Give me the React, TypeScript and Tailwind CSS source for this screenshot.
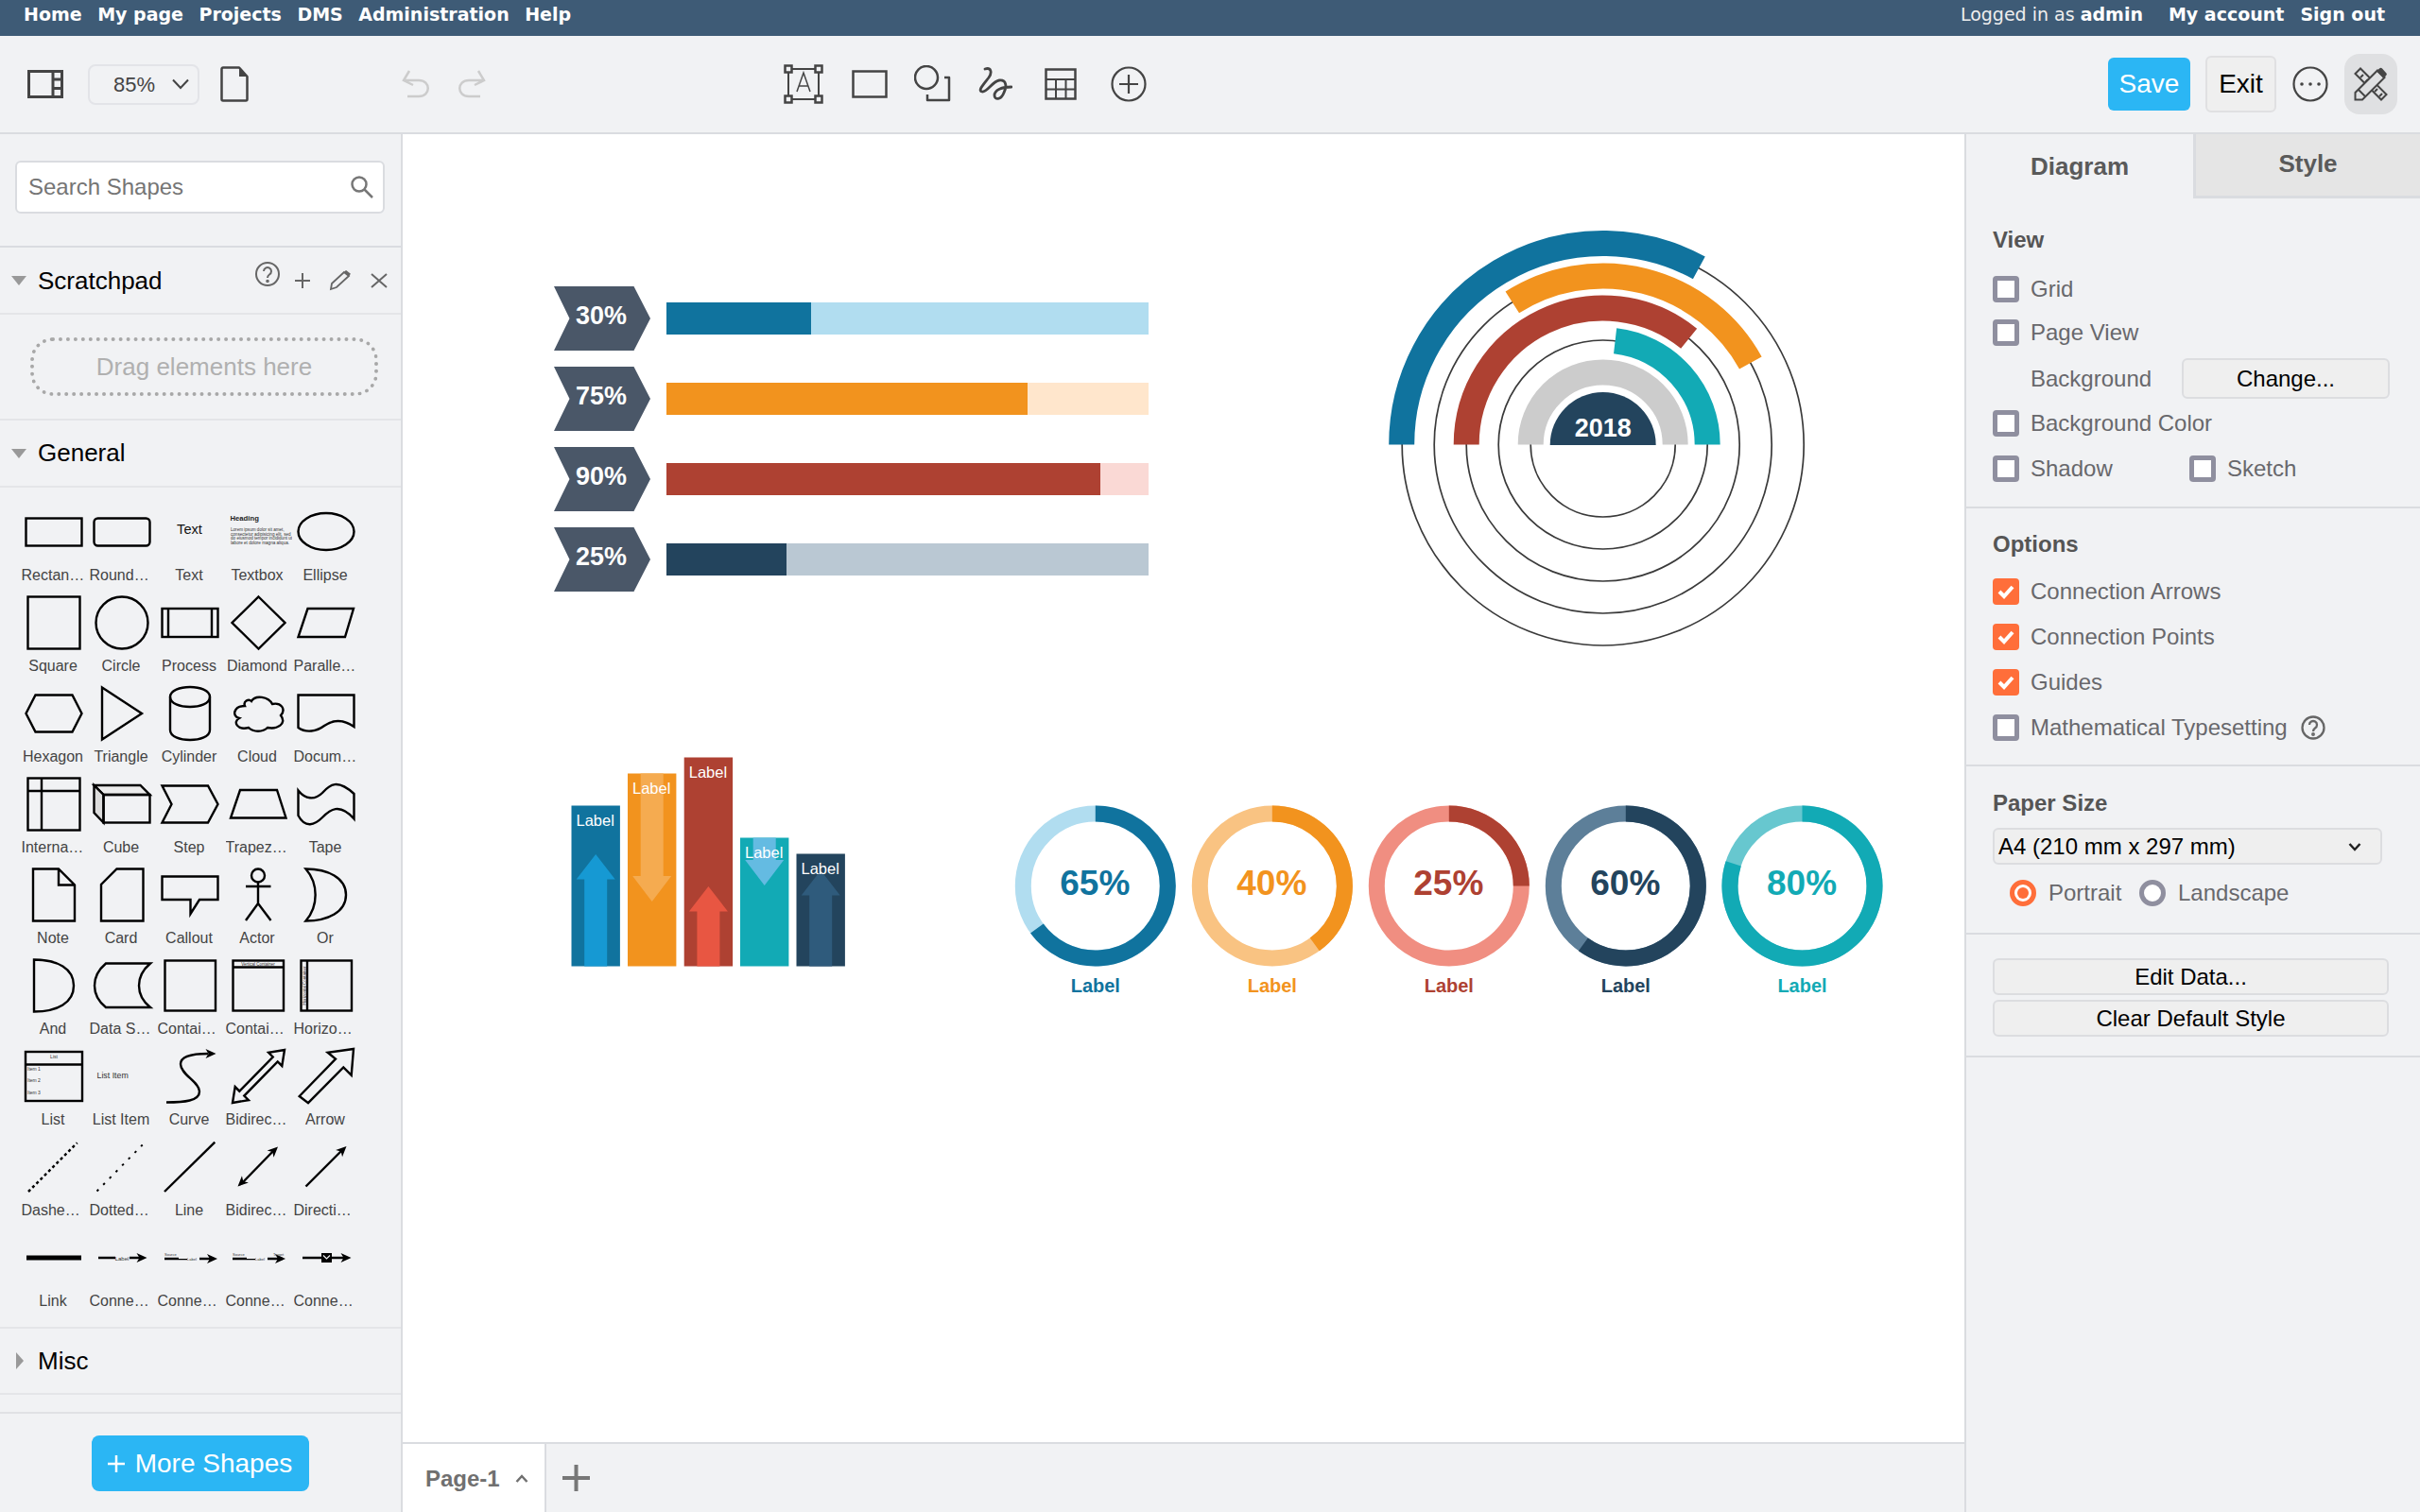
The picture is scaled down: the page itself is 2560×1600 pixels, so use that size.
import type { ReactNode } from 'react';

const INK = '#444';

function arc(cx: number, cy: number, r: number, from: number, to: number) {
  // angles in degrees, 0 is straight up, clockwise
  const pt = (a: number) => {
    const t = ((a - 90) * Math.PI) / 180;
    return `${(cx + r * Math.cos(t)).toFixed(2)} ${(cy + r * Math.sin(t)).toFixed(2)}`;
  };
  const large = to - from > 180 ? 1 : 0;
  return `M${pt(from)} A${r} ${r} 0 ${large} 1 ${pt(to)}`;
}

function Checkbox({ checked }: { checked?: boolean }) {
  if (checked) {
    return (
      <span className="flex h-[28px] w-[28px] shrink-0 items-center justify-center rounded-[4px] bg-[#ff6e3a]">
        <svg width="20" height="18" viewBox="0 0 20 18" fill="none" stroke="#fff" strokeWidth="4">
          <path d="M3 9l5 5 9-10" />
        </svg>
      </span>
    );
  }
  return <span className="block h-[28px] w-[28px] shrink-0 rounded-[4px] border-[5px] border-[#8f8f9f] bg-white" />;
}

function Row({ label, checked, top }: { label: string; checked?: boolean; top: string }) {
  return (
    <div className={`flex items-center gap-[12px] text-[24px] leading-[28px] text-[#68686c] ${top}`}>
      <Checkbox checked={checked} />
      <span>{label}</span>
    </div>
  );
}

function PanelButton({ label, className }: { label: string; className: string }) {
  return (
    <div className={`flex h-[39px] items-center justify-center rounded-[6px] border-2 border-[#dcdde0] bg-[#efefef] text-[24px] text-black ${className}`}>
      {label}
    </div>
  );
}

function Caret({ open }: { open?: boolean }) {
  return (
    <svg width="16" height="18" viewBox="0 0 16 18" className="shrink-0">
      {open ? <path d="M0 4h16l-8 10z" fill="#999" /> : <path d="M3 0l8 9-8 9z" fill="#999" />}
    </svg>
  );
}

function TopBar() {
  return (
    <div className="flex h-[38px] items-start justify-between bg-[#3e5b76] pl-[25px] pr-[37px] pt-[4px] font-['DejaVu_Sans',sans-serif] text-[19px] font-bold leading-[22px] text-white">
      <div className="flex gap-[16.5px]">
        <span>Home</span>
        <span>My page</span>
        <span>Projects</span>
        <span>DMS</span>
        <span>Administration</span>
        <span>Help</span>
      </div>
      <div className="flex">
        <span className="font-normal text-[#eeeeee]">
          Logged in as <span className="font-bold text-white">admin</span>
        </span>
        <span className="ml-[27px]">My account</span>
        <span className="ml-[17px]">Sign out</span>
      </div>
    </div>
  );
}

function Toolbar() {
  return (
    <div className="flex h-[104px] items-center border-b-2 border-[#dadce0] bg-[#f1f2f4] pl-[29px] pr-[24px]">
      <svg width="38" height="30" viewBox="0 0 38 30" fill="none" stroke={INK} strokeWidth="3">
        <rect x="1.5" y="1.5" width="35" height="27" />
        <path d="M27 1.5v27M27 10h10M27 19.5h10" />
      </svg>
      <div className="ml-[26px] flex h-[43px] w-[118px] items-center rounded-[8px] border-2 border-[#e3e4e8] pl-[25px] text-[22px] text-[#444]">
        <span>85%</span>
        <svg width="18" height="12" viewBox="0 0 18 12" fill="none" stroke={INK} strokeWidth="2" className="ml-[18px]">
          <path d="M1 1.5l8 8.5 8-8.5" />
        </svg>
      </div>
      <svg width="30" height="38" viewBox="0 0 30 38" fill="none" stroke={INK} strokeWidth="2.5" className="ml-[22px]">
        <path d="M3 1.5H20L28.5 11V35a1.5 1.5 0 0 1-1.5 1.5H3A1.5 1.5 0 0 1 1.5 35V3A1.5 1.5 0 0 1 3 1.5Z" strokeLinejoin="round" />
        <path d="M20 1.5L28.5 11H20Z" fill={INK} stroke="none" />
      </svg>
      <svg width="30" height="30" viewBox="0 0 30 30" fill="none" stroke="#cccccc" strokeWidth="2.5" className="ml-[162px]">
        <path d="M8 1L2 11l10 5M3 11H18C31 11 31 28 18 28H6" />
      </svg>
      <svg width="32" height="30" viewBox="0 0 32 30" fill="none" stroke="#cccccc" strokeWidth="2.5" className="ml-[27px]">
        <path d="M24 1l6 10-10 5M29 11H14C1 11 1 28 14 28H26" />
      </svg>
      <svg width="42" height="42" viewBox="0 0 42 42" fill="none" stroke={INK} strokeWidth="2" className="ml-[315px]">
        <rect x="5" y="5" width="32" height="32" />
        <g fill="#f1f2f4" strokeWidth="2.5">
          <rect x="1.5" y="1.5" width="7" height="7" />
          <rect x="33.5" y="1.5" width="7" height="7" />
          <rect x="1.5" y="33.5" width="7" height="7" />
          <rect x="33.5" y="33.5" width="7" height="7" />
        </g>
        <path d="M14 29l7-20 7 20M16.5 23h9" strokeWidth="1.5" />
      </svg>
      <svg width="38" height="30" viewBox="0 0 38 30" fill="none" stroke={INK} strokeWidth="2.5" className="ml-[30px]">
        <rect x="1.5" y="1.5" width="35" height="27" />
      </svg>
      <svg width="40" height="40" viewBox="0 0 40 40" fill="none" stroke={INK} strokeWidth="2.5" className="ml-[28px]">
        <circle cx="13" cy="13" r="12" />
        <path d="M32 13h5v24H14v-6" strokeLinejoin="round" />
      </svg>
      <svg width="40" height="38" viewBox="253 70 40 38" fill="none" stroke={INK} strokeWidth="2.8" className="ml-[24px]" strokeLinecap="round">
        <path d="M264 73C270 71 272 76 268 82C262 90 256 96 261 97C266 98 272 86 279 85C287 84 287 92 284 98C281 106 274 106 274 101C274 95 282 92 292 92" />
      </svg>
      <svg width="34" height="34" viewBox="0 0 34 34" fill="none" stroke={INK} strokeWidth="2.5" className="ml-[34px]">
        <rect x="1.5" y="1.5" width="31" height="31" />
        <path d="M1.5 12h31M1.5 22.5h31M12 12v20.500M22.500 12v20.500" strokeWidth="2" />
      </svg>
      <svg width="38" height="38" viewBox="0 0 38 38" fill="none" stroke={INK} strokeWidth="2.2" className="ml-[36px]">
        <circle cx="19" cy="19" r="17.500" />
        <path d="M19 9v20M9 19h20" />
      </svg>
      <div className="ml-auto flex h-[56px] w-[87px] items-center justify-center rounded-[6px] bg-[#2bb6f4] text-[28px] text-white">Save</div>
      <div className="ml-[16px] flex h-[60px] w-[75px] items-center justify-center rounded-[6px] border-2 border-[#e0e0e2] bg-[#efefef] text-[28px] text-black">Exit</div>
      <svg width="38" height="38" viewBox="0 0 38 38" fill="none" stroke={INK} strokeWidth="2.2" className="ml-[17px]">
        <circle cx="19" cy="19" r="17.500" />
        <g fill={INK} stroke="none">
          <circle cx="10" cy="19" r="1.800" />
          <circle cx="19" cy="19" r="1.800" />
          <circle cx="28" cy="19" r="1.800" />
        </g>
      </svg>
      <div className="ml-[17px] flex h-[64px] w-[56px] items-center justify-center rounded-[16px] bg-[#dfe0e2]">
        <svg width="36" height="36" viewBox="0 0 36 36" fill="none" stroke={INK} strokeWidth="2">
          <path d="M1.500 7L7 1.500 34.500 29 29 34.500Z" />
          <path d="M7 11l3-3M12 16l3-3M22 26l3-3M27 31l3-3" />
          <path d="M1.500 34.500V27L25 3.500 32.500 11 9 34.500Z" fill="#dfe0e2" />
          <path d="M27 1.500a2 2 0 0 1 3 0L34 6a2 2 0 0 1 0 3l-2.500 3L24 4.500Z" fill={INK} stroke="none" />
          <path d="M5 24l7 7" />
        </svg>
      </div>
    </div>
  );
}

const ink = { fill: 'none', stroke: '#000', strokeWidth: 2.4 };

function TinyText({ x, y, size, children, anchor }: { x: number; y: number; size: number; children: ReactNode; anchor?: 'middle' }) {
  return (
    <text x={x} y={y} fontSize={size} fill="#333" stroke="none" textAnchor={anchor} fontFamily="'Liberation Sans', sans-serif">
      {children}
    </text>
  );
}

function Head({ x, y, angle }: { x: number; y: number; angle: number }) {
  return <path d="M0 0L-11 -5L-8 0L-11 5Z" fill="#000" stroke="none" transform={`translate(${x} ${y}) rotate(${angle})`} />;
}

const shapes: { label: string; draw: ReactNode }[] = [
  { label: 'Rectangle', draw: <rect x="6.500" y="17.500" width="59" height="29" /> },
  { label: 'Rounded Rectangle', draw: <rect x="6.500" y="17.500" width="59" height="29" rx="4" /> },
  {
    label: 'Text',
    draw: (
      <text x="35.500" y="34" fontSize="14.600" fill="#111" stroke="none" textAnchor="middle" fontFamily="'Liberation Sans', sans-serif">
        Text
      </text>
    ),
  },
  {
    label: 'Textbox',
    draw: (
      <g>
        <text x="6.500" y="20" fontSize="7.700" fontWeight="700" fill="#222" stroke="none" fontFamily="'Liberation Sans', sans-serif">
          Heading
        </text>
        <TinyText x={7} y={31} size={4.600}>Lorem ipsum dolor sit amet,</TinyText>
        <TinyText x={7} y={35.500} size={4.600}>consectetur adipisicing elit, sed</TinyText>
        <TinyText x={7} y={40} size={4.600}>do eiusmod tempor incididunt ut</TinyText>
        <TinyText x={7} y={45} size={4.600}>labore et dolore magna aliqua.</TinyText>
      </g>
    ),
  },
  { label: 'Ellipse', draw: <ellipse cx="36" cy="31.500" rx="29.500" ry="19.500" /> },
  { label: 'Square', draw: <rect x="8.500" y="4.500" width="55" height="55" /> },
  { label: 'Circle', draw: <circle cx="36" cy="32" r="27.500" /> },
  {
    label: 'Process',
    draw: (
      <g>
        <rect x="6.500" y="17" width="59" height="30" />
        <path d="M13 17v30M59 17v30" />
      </g>
    ),
  },
  { label: 'Diamond', draw: <path d="M36.500 4.500L64.500 32L36.500 59.500L8.500 32Z" /> },
  { label: 'Parallelogram', draw: <path d="M16.500 17H65L56 47H6.500Z" /> },
  { label: 'Hexagon', draw: <path d="M16.500 12.500H55.500L65.500 32L55.500 51.500H16.500L6.500 32Z" /> },
  { label: 'Triangle', draw: <path d="M15 4.500L57 32L15 59.500Z" /> },
  {
    label: 'Cylinder',
    draw: (
      <g>
        <path d="M15 14.500C15 0.500 57 0.500 57 14.500V49.500C57 63.500 15 63.500 15 49.500Z" />
        <path d="M15 14.500C15 28.500 57 28.500 57 14.500" />
      </g>
    ),
  },
  {
    label: 'Cloud',
    draw: <path d="M22 24C10 24 8 35 16 37C9 41 14 50 26 47C31 52 41 52 46 47C56 49 67 43 60 34C66 27 60 20 51 22C47 14 33 12 29 19C26 16 20 19 22 24Z" />,
  },
  { label: 'Document', draw: <path d="M6.500 12.500H65.500V46C54 38 44 38 34 45C26 51 15 53 6.500 47Z" /> },
  {
    label: 'Internal Storage',
    draw: (
      <g>
        <rect x="8.500" y="4.500" width="55" height="55" />
        <path d="M23 4.500v55M8.500 18h55" />
      </g>
    ),
  },
  {
    label: 'Cube',
    draw: (
      <g>
        <path d="M6.500 12H55.500L65.500 22H16.500Z" fill="#ececec" />
        <path d="M6.500 12L16.500 22V51.500L6.500 41Z" fill="#dcdcdc" />
        <rect x="16.500" y="22" width="49" height="29.500" />
      </g>
    ),
  },
  { label: 'Step', draw: <path d="M6.500 12.500H55L65.500 32L55 51.500H6.500L16.500 32Z" /> },
  { label: 'Trapezoid', draw: <path d="M17 17H56L65.500 46.500H7Z" /> },
  {
    label: 'Tape',
    draw: <path d="M6.500 17.500C14 27 24 28 32 20C40 11 48 5 65.500 21V47.500C50 30 40 38 32 46C24 54 14 58 6.500 44Z" />,
  },
  { label: 'Note', draw: <path d="M14 4.500H41L58 21.500V59.500H14ZM41 4.500V21.500H58" /> },
  { label: 'Card', draw: <path d="M30.500 4.500H58.500V59.500H14V21Z" /> },
  { label: 'Callout', draw: <path d="M6.500 12.500H65.500V37H46L36.500 52V37H6.500Z" /> },
  {
    label: 'Actor',
    draw: (
      <g>
        <circle cx="36" cy="11.500" r="7" />
        <path d="M36 18.500V41M23 23H49.500M23 59L36 41L49.500 59" />
      </g>
    ),
  },
  { label: 'Or', draw: <path d="M14.500 4.500C38 4.500 57 14 57 32C57 50 38 59.500 14.500 59.500C28 44 28 20 14.500 4.500Z" /> },
  { label: 'And', draw: <path d="M15 4.500C40 4.500 57 14 57 32C57 50 40 59.500 15 59.500Z" /> },
  { label: 'Data Storage', draw: <path d="M19 8.500H66C50 22 50 42 66 55H19C3 42 3 22 19 8.500Z" /> },
  { label: 'Container', draw: <rect x="9.500" y="5.500" width="53.500" height="53" /> },
  {
    label: 'Container',
    draw: (
      <g>
        <rect x="9.500" y="5.500" width="53.500" height="53" />
        <path d="M9.500 12.500H63" />
        <TinyText x={36} y={10.500} size={4.500} anchor="middle">Vertical Container</TinyText>
      </g>
    ),
  },
  {
    label: 'Horizontal Container',
    draw: (
      <g>
        <rect x="9.500" y="5.500" width="53.500" height="53" />
        <path d="M16 5.500V58.500" />
        <g transform="translate(14.500 32) rotate(-90)">
          <TinyText x={0} y={0} size={4.500} anchor="middle">Horizontal Container</TinyText>
        </g>
      </g>
    ),
  },
  {
    label: 'List',
    draw: (
      <g>
        <rect x="6" y="6" width="60" height="52" />
        <path d="M6 19.500H66" />
        <TinyText x={36} y={13} size={5} anchor="middle">List</TinyText>
        <TinyText x={8} y={26} size={5}>Item 1</TinyText>
        <TinyText x={8} y={38} size={5}>Item 2</TinyText>
        <TinyText x={8} y={51} size={5}>Item 3</TinyText>
      </g>
    ),
  },
  {
    label: 'List Item',
    draw: <TinyText x={9.500} y={33.500} size={8.800}>List Item</TinyText>,
  },
  {
    label: 'Curve',
    draw: (
      <g>
        <path d="M11 59.500C30 59.500 46 58 46 48C46 38 26 30 26 19C26 10 40 8 55 8" />
        <Head x={63.500} y={8} angle={0} />
      </g>
    ),
  },
  {
    label: 'Bidirectional Arrow',
    draw: <path d="M64 4L61.300 20.900L56.700 16.400L21.300 52.600L25.900 57.100L9 60L11.700 43.100L16.300 47.700L51.700 11.500L47.100 6.900Z" />,
  },
  { label: 'Arrow', draw: <path d="M65 3L62.700 30.800L54.300 22.400L17 60.200L7.700 53L46 13.500L37.700 6.700Z" /> },
  { label: 'Dashed Line', draw: <path d="M9 58L60.700 6.300" strokeDasharray="3 3" strokeWidth="2.500" /> },
  { label: 'Dotted Line', draw: <path d="M9.500 57.500L57.700 8.500" strokeDasharray="2.500 7" strokeWidth="2" /> },
  { label: 'Line', draw: <path d="M9 58L62.300 5.600" /> },
  {
    label: 'Bidirectional Connector',
    draw: (
      <g>
        <path d="M18 50L54 13" />
        <Head x={57} y={10.500} angle={-44} />
        <Head x={14.500} y={52.500} angle={136} />
      </g>
    ),
  },
  {
    label: 'Directional Connector',
    draw: (
      <g>
        <path d="M14.500 52.500L54 13" />
        <Head x={57.500} y={10} angle={-44} />
      </g>
    ),
  },
  { label: 'Link', draw: <path d="M7 32H65" strokeWidth="5" /> },
  {
    label: 'Connector with Label',
    draw: (
      <g>
        <path d="M11 32H55" />
        <Head x={62.500} y={32} angle={0} />
        <rect x="29" y="27" width="15" height="10" fill="#f1f2f4" stroke="none" />
        <TinyText x={36} y={34.500} size={6} anchor="middle">Label</TinyText>
      </g>
    ),
  },
  {
    label: 'Connector with 2 Labels',
    draw: (
      <g>
        <path d="M9 33H58" />
        <Head x={65} y={33} angle={0} />
        <rect x="24" y="28" width="10" height="5" fill="#f1f2f4" stroke="none" />
        <rect x="33" y="29" width="13" height="8" fill="#f1f2f4" stroke="none" />
        <TinyText x={9} y={30} size={4}>Source</TinyText>
        <TinyText x={33} y={35} size={4}>Label</TinyText>
      </g>
    ),
  },
  {
    label: 'Connector with 3 Labels',
    draw: (
      <g>
        <path d="M9 33H62" />
        <Head x={65} y={33} angle={0} />
        <rect x="24" y="28" width="10" height="5" fill="#f1f2f4" stroke="none" />
        <rect x="33" y="29" width="13" height="8" fill="#f1f2f4" stroke="none" />
        <TinyText x={9} y={30} size={4}>Source</TinyText>
        <TinyText x={33} y={35} size={4}>Label</TinyText>
        <TinyText x={52} y={30} size={4}>Target</TinyText>
      </g>
    ),
  },
  {
    label: 'Connector with Symbol',
    draw: (
      <g>
        <path d="M11 32H55" />
        <Head x={62.500} y={32} angle={0} />
        <rect x="31" y="27" width="11" height="10" fill="#000" stroke="none" />
        <path d="M33 29.500L36.500 33L40 29.500" stroke="#f1f2f4" strokeWidth="1.200" />
      </g>
    ),
  },
];

function Sidebar() {
  return (
    <aside className="flex w-[426px] shrink-0 flex-col border-r-2 border-[#dadce0] bg-[#f1f2f4]">
      <div className="h-[120px] border-b-2 border-[#dadce0] pl-[16px] pt-[28px]">
        <div className="flex h-[56px] w-[391px] items-center justify-between rounded-[6px] border-2 border-[#dadce0] bg-white pl-[12px] pr-[10px] text-[24px] text-[#757575]">
          <span>Search Shapes</span>
          <svg width="24" height="24" viewBox="0 0 24 24" fill="none" stroke="#777" strokeWidth="2.500">
            <circle cx="9" cy="9" r="7.500" />
            <path d="M14.500 14.500L23 23" />
          </svg>
        </div>
      </div>

      <div className="flex h-[71px] items-center border-b-2 border-[#e4e5e8] pl-[12px] text-[26px] text-black">
        <Caret open />
        <span className="ml-[12px] pt-[2px]">Scratchpad</span>
        <svg width="26" height="28" viewBox="0 0 26 28" fill="none" stroke="#666" strokeWidth="2" className="relative top-[-7px] ml-[98px]">
          <circle cx="13" cy="14" r="12" />
          <path d="M9 11a4 4 0 1 1 6 3.500c-1.500 1-2 1.500-2 3.500" />
          <circle cx="13" cy="21.500" r="0.800" />
        </svg>
        <svg width="18" height="18" viewBox="0 0 18 18" fill="none" stroke="#666" strokeWidth="2" className="ml-[15px]">
          <path d="M9 1v16M1 9h16" />
        </svg>
        <svg width="24" height="22" viewBox="0 0 24 22" fill="none" stroke="#666" strokeWidth="1.800" className="ml-[19px]">
          <path d="M2 20l1-6L16 2l5 4L8 18Z" />
          <path d="M17 1l5 4" strokeWidth="3" />
        </svg>
        <svg width="18" height="16" viewBox="0 0 18 16" fill="none" stroke="#666" strokeWidth="2" className="ml-[20px]">
          <path d="M1 1l16 14M17 1L1 15" />
        </svg>
      </div>

      <div className="h-[112px] border-b-2 border-[#e4e5e8] pl-[32px] pt-[24px]">
        <div className="flex h-[62px] w-[368px] items-center justify-center rounded-[24px] border-[4px] border-dotted border-[#a8a8a8] text-[26px] text-[#b0b0b0]">
          Drag elements here
        </div>
      </div>

      <div className="flex h-[71px] items-center border-b-2 border-[#e4e5e8] pl-[12px] text-[26px] text-black">
        <Caret open />
        <span className="ml-[12px]">General</span>
      </div>

      <div className="grid grid-cols-[repeat(5,72px)] auto-rows-[96px] border-b-2 border-[#e4e5e8] pb-[9px] pl-[21px] pt-[15px]">
        {shapes.map((s, i) => (
          <div key={i} className="flex flex-col items-center">
            <svg width="72" height="64" viewBox="0 0 72 64" {...ink}>
              {s.draw}
            </svg>
            <div className="-ml-[2px] mt-[2px] w-[67px] truncate text-center text-[16px] leading-[24px] text-[#444]">{s.label}</div>
          </div>
        ))}
      </div>

      <div className="flex h-[70px] items-center border-b-2 border-[#e4e5e8] pl-[14px] text-[26px] text-black">
        <Caret />
        <span className="ml-[10px]">Misc</span>
      </div>
      <div className="h-[20px] border-b-2 border-[#e0e1e4]" />

      <div className="flex flex-1 justify-center pr-[1px] pt-[23px]">
        <div className="flex h-[59px] w-[230px] items-center justify-center gap-[11px] rounded-[8px] bg-[#2bb6f4] text-[28px] text-white">
          <svg width="18" height="18" viewBox="0 0 18 18" fill="none" stroke="#fff" strokeWidth="2.500">
            <path d="M9 0v18M0 9h18" />
          </svg>
          <span>More Shapes</span>
        </div>
      </div>
    </aside>
  );
}

const bars = [
  { label: '30%', y: 320, end: 858, dark: '#10739e', light: '#b1ddf0' },
  { label: '75%', y: 405, end: 1087, dark: '#f2931e', light: '#ffe6cc' },
  { label: '90%', y: 490, end: 1164, dark: '#ae4132', light: '#fad9d5' },
  { label: '25%', y: 575, end: 832, dark: '#23445d', light: '#bac8d3' },
];

const columns = [
  { x: 604.500, top: 852.500, color: '#10739e', arrow: '#1699d3', up: true, tip: 904 },
  { x: 664, top: 818.500, color: '#f2931e', arrow: '#f5ab50', up: false, tip: 954 },
  { x: 723.700, top: 801.500, color: '#ae4132', arrow: '#e85642', up: true, tip: 938 },
  { x: 783, top: 886.500, color: '#12aab5', arrow: '#64bbe2', up: false, tip: 937 },
  { x: 842.500, top: 903.500, color: '#23445d', arrow: '#2f5b7c', up: true, tip: 921 },
];

const donuts = [
  { cx: 1158.800, pct: 65, dark: '#10739e', light: '#b1ddf0' },
  { cx: 1345.800, pct: 40, dark: '#f2931e', light: '#f9c382' },
  { cx: 1532.800, pct: 25, dark: '#ae4132', light: '#f08e81' },
  { cx: 1719.800, pct: 60, dark: '#23445d', light: '#5d7f99' },
  { cx: 1906.500, pct: 80, dark: '#12aab5', light: '#67c7cf' },
];

function Diagram() {
  const cx = 1695.700;
  const cy = 470.500;
  return (
    <svg viewBox="426 142 1652 1384" className="block h-full w-full" fontFamily="'Liberation Sans', sans-serif">
      {bars.map((b) => (
        <g key={b.label}>
          <path
            d={`M586 ${b.y - 17}H670.500L688 ${b.y + 17}L670.500 ${b.y + 51}H586L602.500 ${b.y + 17}Z`}
            fill="#4a5768"
          />
          <text x="636" y={b.y + 23} textAnchor="middle" fontSize="27" fontWeight="700" fill="#fff">
            {b.label}
          </text>
          <rect x="705" y={b.y} width="510" height="34" fill={b.light} />
          <rect x="705" y={b.y} width={b.end - 705} height="34" fill={b.dark} />
        </g>
      ))}

      <g fill="none" stroke="#3a3a3a" strokeWidth="1.700">
        {[212.500, 178.500, 144.500, 110.500, 76.500].map((r) => (
          <circle key={r} cx={cx} cy={cy} r={r} />
        ))}
      </g>
      <g fill="none" strokeWidth="27">
        <path d={arc(cx, cy, 76.500, -90, 90)} stroke="#cccccc" />
        <path d={arc(cx, cy, 110.500, 6.700, 90)} stroke="#12aab5" />
        <path d={arc(cx, cy, 144.500, -90, 39)} stroke="#ae4132" />
        <path d={arc(cx, cy, 178.500, -32.500, 61)} stroke="#f2931e" />
        <path d={arc(cx, cy, 213, -90, 28.500)} stroke="#10739e" />
      </g>
      <path d={`M${cx - 56} ${cy + 0.500}A56 56 0 0 1 ${cx + 56} ${cy + 0.500}Z`} fill="#23445d" />
      <text x={cx} y="462" textAnchor="middle" fontSize="27" fontWeight="700" fill="#fff">
        2018
      </text>

      {columns.map((c) => {
        const m = c.x + 25.700;
        const bottom = 1022.500;
        const arrow = c.up
          ? `M${m} ${c.tip}L${m + 20.500} ${c.tip + 26.500}H${m + 12}V${bottom}H${m - 12}V${c.tip + 26.500}H${m - 20.500}Z`
          : `M${m} ${c.tip}L${m + 20.500} ${c.tip - 27}H${m + 12}V${c.top}H${m - 12}V${c.tip - 27}H${m - 20.500}Z`;
        return (
          <g key={c.x}>
            <rect x={c.x} y={c.top} width="51.400" height={bottom - c.top} fill={c.color} />
            <path d={arrow} fill={c.arrow} />
            <text x={m - 0.500} y={c.top + 21.500} textAnchor="middle" fontSize="16.500" fill="#fff">
              Label
            </text>
          </g>
        );
      })}

      {donuts.map((d) => (
        <g key={d.cx}>
          <circle cx={d.cx} cy="937.500" r="76.500" fill="none" stroke={d.light} strokeWidth="17" />
          <path d={arc(d.cx, 937.500, 76.500, 0, (d.pct / 100) * 360)} fill="none" stroke={d.dark} strokeWidth="17" />
          <text x={d.cx - 0.500} y="947" textAnchor="middle" fontSize="37" fontWeight="700" fill={d.dark}>
            {d.pct}%
          </text>
          <text x={d.cx} y="1049.500" textAnchor="middle" fontSize="20" fontWeight="700" fill={d.dark}>
            Label
          </text>
        </g>
      ))}
    </svg>
  );
}

function PageTabs() {
  return (
    <div className="flex h-[74px] items-stretch border-t-2 border-[#dadce0] bg-[#f1f2f4]">
      <div className="flex w-[152px] items-center border-r-2 border-[#dadce0] bg-white pl-[24px] pt-[1px] text-[24px] font-bold text-[#707070]">
        <span>Page-1</span>
        <svg width="14" height="10" viewBox="0 0 14 10" fill="none" stroke="#707070" strokeWidth="2.500" className="ml-[16px]">
          <path d="M1.500 8L7 2l5.500 6" />
        </svg>
      </div>
      <div className="ml-[17px] flex items-center">
        <svg width="29" height="28" viewBox="0 0 29 28" fill="none" stroke="#777" strokeWidth="4">
          <path d="M14.500 0v28M0 14h29" />
        </svg>
      </div>
    </div>
  );
}

function RightPanel() {
  return (
    <aside className="flex w-[482px] shrink-0 flex-col border-l-2 border-[#dadce0] bg-[#f1f2f4]">
      <div className="flex h-[68px] font-bold text-[#5a5a5a]">
        <div className="flex w-[240px] items-center justify-center text-[26px]">Diagram</div>
        <div className="flex flex-1 items-center justify-center border-b-[3px] border-l-[3px] border-[#dadce0] bg-[#e5e5e5] pb-[3px] text-[26px]">Style</div>
      </div>

      <div className="h-[328px] border-b-2 border-[#dadce0] pl-[28px] pt-[30px]">
        <div className="text-[24px] font-bold leading-[28px] text-[#555]">View</div>
        <Row label="Grid" top="mt-[24px]" />
        <Row label="Page View" top="mt-[18px]" />
        <div className="mt-[13px] flex h-[43px] items-center pl-[40px] text-[24px] text-[#68686c]">
          <span className="w-[160px]">Background</span>
          <PanelButton label="Change..." className="h-[43px] w-[220px]" />
        </div>
        <Row label="Background Color" top="mt-[12px]" />
        <div className="mt-[20px] flex">
          <div className="w-[208px]">
            <Row label="Shadow" top="" />
          </div>
          <Row label="Sketch" top="" />
        </div>
      </div>

      <div className="h-[273px] border-b-2 border-[#dadce0] pl-[28px] pt-[24px]">
        <div className="text-[24px] font-bold leading-[28px] text-[#555]">Options</div>
        <Row label="Connection Arrows" checked top="mt-[22px]" />
        <Row label="Connection Points" checked top="mt-[20px]" />
        <Row label="Guides" checked top="mt-[20px]" />
        <div className="mt-[20px] flex items-center gap-[12px] text-[24px] leading-[28px] text-[#68686c]">
          <Checkbox />
          <span>Mathematical Typesetting</span>
          <svg width="26" height="26" viewBox="0 0 26 26" fill="none" stroke="#666" strokeWidth="2.300" className="ml-[2px]">
            <circle cx="13" cy="13" r="11.500" />
            <path d="M9 10a4 4 0 1 1 6 3.500c-1.500 1-2 1.500-2 3.500" />
            <circle cx="13" cy="20" r="0.800" />
          </svg>
        </div>
      </div>

      <div className="h-[178px] border-b-2 border-[#dadce0] pl-[28px] pt-[25px]">
        <div className="text-[24px] font-bold leading-[28px] text-[#555]">Paper Size</div>
        <div className="mt-[12px] flex h-[39px] w-[412px] items-center justify-between rounded-[6px] border-2 border-[#dcdde0] bg-[#efefef] pl-[4px] pr-[20px] text-[24px] text-black">
          <span>A4 (210 mm x 297 mm)</span>
          <svg width="14" height="10" viewBox="0 0 14 10" fill="none" stroke="#222" strokeWidth="2.500">
            <path d="M1.500 2L7 8l5.500-6" />
          </svg>
        </div>
        <div className="mt-[16px] flex items-center pl-[18px] text-[24px] leading-[28px] text-[#68686c]">
          <span className="flex h-[28px] w-[28px] items-center justify-center rounded-full border-[5px] border-[#ff6e3a] bg-white">
            <span className="h-[12px] w-[12px] rounded-full bg-[#ff6e3a]" />
          </span>
          <span className="ml-[13px] w-[96px]">Portrait</span>
          <span className="h-[28px] w-[28px] rounded-full border-[5px] border-[#8f8f9f] bg-white" />
          <span className="ml-[13px]">Landscape</span>
        </div>
      </div>

      <div className="h-[130px] border-b-2 border-[#dadce0] pl-[28px] pt-[25px]">
        <PanelButton label="Edit Data..." className="w-[419px]" />
        <PanelButton label="Clear Default Style" className="mt-[5px] w-[419px]" />
      </div>
    </aside>
  );
}

export default function App() {
  return (
    <div className="flex h-[1600px] w-[2560px] flex-col overflow-hidden font-['Liberation_Sans',sans-serif]">
      <TopBar />
      <Toolbar />
      <div className="flex min-h-0 flex-1">
        <Sidebar />
        <main className="flex min-w-0 flex-1 flex-col bg-white">
          <div className="min-h-0 flex-1">
            <Diagram />
          </div>
          <PageTabs />
        </main>
        <RightPanel />
      </div>
    </div>
  );
}
